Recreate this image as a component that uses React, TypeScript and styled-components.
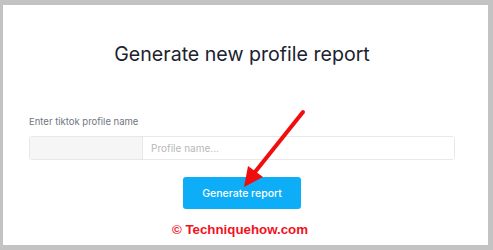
import React from "react";
import styled, { createGlobalStyle } from "styled-components";

const Global = createGlobalStyle`
  html, body { margin: 0; padding: 0; background: #c3c3c3; }
  body { font-family: Inter, "Noto Sans", sans-serif; }
`;

const Frame = styled.div`
  width: 493px;
  height: 250px;
  box-sizing: border-box;
  padding: 5px 5px 5px 3px;
  background: #c3c3c3;
  position: relative;
`;

const Card = styled.div`
  height: 100%;
  background: #ffffff;
  box-sizing: border-box;
  padding: 37px 33px 0 26px;
  display: flex;
  flex-direction: column;
  align-items: stretch;
`;

const Title = styled.h1`
  margin: 0;
  font-size: 19.6px;
  line-height: 24px;
  font-weight: 400;
  color: #1c2230;
  text-align: center;
  letter-spacing: 0;
`;

const Label = styled.label`
  margin-top: 50px;
  font-size: 9.5px;
  line-height: 12px;
  color: #6f7682;
`;

const InputGroup = styled.div`
  margin-top: 8px;
  height: 24px;
  display: flex;
  border: 1px solid #e8e8e8;
  border-radius: 3px;
  box-sizing: border-box;
  overflow: hidden;
`;

const Addon = styled.div`
  width: 112px;
  background: #f6f6f6;
  border-right: 1px solid #e8e8e8;
`;

const Input = styled.input`
  flex: 1;
  border: none;
  outline: none;
  padding: 0 8px;
  font-family: Inter, "Noto Sans", sans-serif;
  font-size: 10px;
  color: #333;
  background: #fff;
  &::placeholder { color: #b8b8bc; }
`;

const ButtonRow = styled.div`
  margin-top: 17px;
  display: flex;
  justify-content: center;
`;

const Button = styled.button`
  width: 118px;
  height: 32px;
  border: none;
  border-radius: 3px;
  background: #0daef7;
  color: #ffffff;
  font-family: Inter, "Noto Sans", sans-serif;
  font-size: 10.5px;
  font-weight: 500;
  cursor: pointer;
`;

const Watermark = styled.div`
  margin-top: 13px;
  text-align: center;
  font-family: "Liberation Sans", Arial, sans-serif;
  font-weight: 700;
  font-size: 13.3px;
  line-height: 16px;
  color: #f2121e;
  padding-right: 4px;
`;

const Arrow = styled.svg`
  position: absolute;
  left: 0;
  top: 0;
  pointer-events: none;
`;

export default function App() {
  return (
    <>
      <Global />
      <Frame>
        <Card>
          <Title>Generate new profile report</Title>
          <Label>Enter tiktok profile name</Label>
          <InputGroup>
            <Addon />
            <Input placeholder="Profile name..." />
          </InputGroup>
          <ButtonRow>
            <Button>Generate report</Button>
          </ButtonRow>
          <Watermark>© Techniquehow.com</Watermark>
        </Card>
        <Arrow width="493" height="250" viewBox="0 0 493 250">
          <line x1="303" y1="112" x2="255" y2="172" stroke="#f10d0d" strokeWidth="4" strokeLinecap="round" />
          <polygon points="244,187 248,166 263,177" fill="#f10d0d" />
        </Arrow>
      </Frame>
    </>
  );
}
